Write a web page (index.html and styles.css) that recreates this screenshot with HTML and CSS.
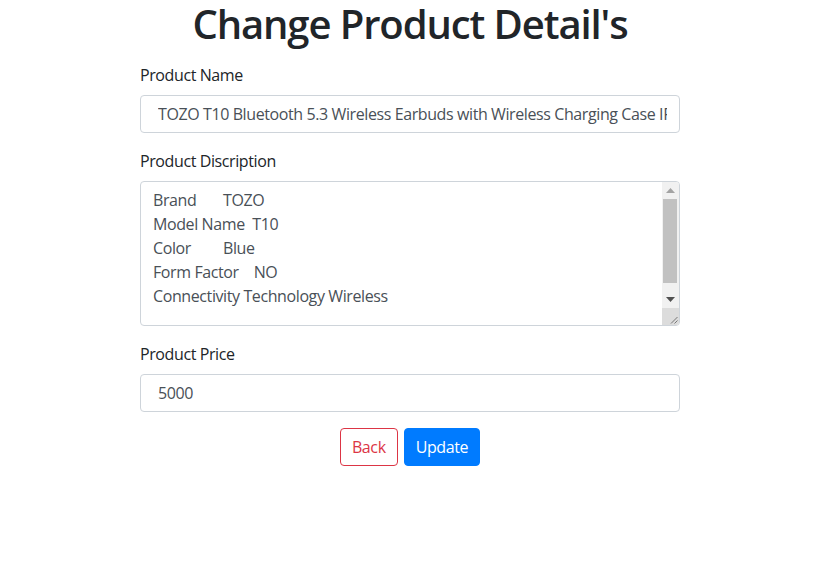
FILE: index.html
```html
<!DOCTYPE html>
<html lang="en">
<head>
<meta charset="utf-8">
<title>Change Product Detail's</title>
<link rel="stylesheet" href="styles.css">
</head>
<body>
<div class="page">
  <h1 class="title">Change Product Detail's</h1>
  <form class="form">
    <div class="group">
      <label class="label" for="pname">Product Name</label>
      <input class="control pad" id="pname" type="text" value="TOZO T10 Bluetooth 5.3 Wireless Earbuds with Wireless Charging Case IPX8 Waterproof Stereo Headphones">
    </div>
    <div class="group">
      <label class="label" for="pdesc">Product Discription</label>
      <div class="desc-wrap">
        <textarea class="control desc" id="pdesc">Brand	TOZO
Model Name  T10
Color	Blue
Form Factor    NO
Connectivity Technology Wireless

</textarea>
        <div class="scrollbar" aria-hidden="true">
          <div class="sb-btn">
            <svg width="9" height="5" viewBox="0 0 9 5"><path d="M0 5 L4.5 0 L9 5 Z" fill="#a3a3a3"/></svg>
          </div>
          <div class="sb-track"><div class="sb-thumb"></div></div>
          <div class="sb-btn">
            <svg width="9" height="5" viewBox="0 0 9 5"><path d="M0 0 L9 0 L4.5 5 Z" fill="#505050"/></svg>
          </div>
          <div class="sb-corner">
            <svg width="17" height="17" viewBox="0 0 17 17"><path d="M15.5 9 L9 15.5 M15.5 12.5 L12.5 15.5" stroke="#777" stroke-width="1" fill="none"/></svg>
          </div>
        </div>
      </div>
    </div>
    <div class="group">
      <label class="label" for="pprice">Product Price</label>
      <input class="control pad" id="pprice" type="text" value="5000">
    </div>
    <div class="actions">
      <button type="button" class="btn btn-back">Back</button>
      <button type="button" class="btn btn-update">Update</button>
    </div>
  </form>
</div>
</body>
</html>
```
FILE: styles.css
```css
* { box-sizing: border-box; }
html, body { margin: 0; background: #fff; }
body {
  font-family: "Open Sans", "Noto Sans", sans-serif;
  font-size: 16px;
  line-height: 1.5;
  color: #212529;
  letter-spacing: -0.4px;
}
.page {
  width: 540px;
  margin-left: 140px;
}
.title {
  margin: 0 0 15px;
  font-size: 40px;
  font-weight: 600;
  line-height: 48px;
  letter-spacing: -1.1px;
  text-align: center;
  color: #212529;
}
.group { margin-bottom: 16px; }
.label {
  display: block;
  margin-bottom: 8px;
  line-height: 24px;
}
.control {
  display: block;
  width: 100%;
  font-family: inherit;
  font-size: 16px;
  letter-spacing: -0.4px;
  line-height: 24px;
  color: #495057;
  background: #fff;
  border: 1px solid #ced4da;
  border-radius: 4px;
  outline: none;
}
.pad {
  height: 38px;
  padding: 6px 12px 6px 17px;
}
.desc-wrap { position: relative; }
.desc {
  height: 145px;
  padding: 6px 30px 6px 12px;
  resize: none;
  overflow: hidden;
  tab-size: 35px;
  white-space: pre-wrap;
}
.scrollbar {
  position: absolute;
  top: 1px;
  right: 1px;
  bottom: 1px;
  width: 17px;
  display: flex;
  flex-direction: column;
  background: #f1f1f1;
  border-radius: 0 3px 3px 0;
  overflow: hidden;
}
.sb-btn {
  height: 17px;
  flex: 0 0 17px;
  display: flex;
  align-items: center;
  justify-content: center;
}
.sb-btn svg { display: block; }
.sb-track {
  flex: 1;
  padding: 0 2px 0 1px;
}
.sb-thumb {
  height: 84px;
  background: #c1c1c1;
}
.sb-corner {
  height: 17px;
  flex: 0 0 17px;
  background: #dcdcdc;
}
.sb-corner svg { display: block; }
.actions {
  display: flex;
  justify-content: center;
  gap: 6px;
}
.btn {
  font-family: inherit;
  font-size: 16px;
  letter-spacing: -0.4px;
  line-height: 24px;
  padding: 6px 11px;
  border: 1px solid transparent;
  border-radius: 4px;
  cursor: pointer;
}
.btn-back {
  color: #dc3545;
  background: #fff;
  border-color: #dc3545;
}
.btn-update {
  color: #fff;
  background: #007bff;
  border-color: #007bff;
}
```
